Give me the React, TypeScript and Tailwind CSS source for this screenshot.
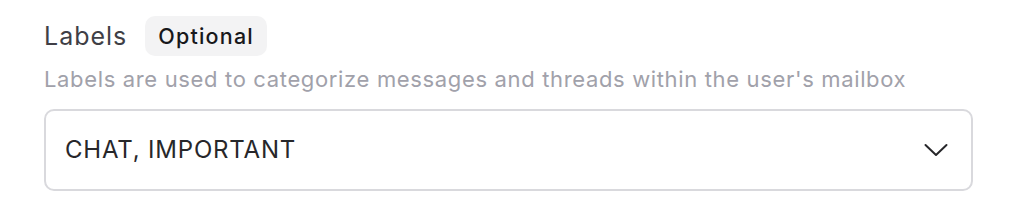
export default function App() {
  return (
    <div className="min-h-[216px] w-[1010px] bg-white font-['Inter',sans-serif]">
      <div className="flex w-[929px] flex-col pl-[44px] pt-[16px]">
        {/* Label row */}
        <div className="flex items-center gap-[18px]">
          <span className="text-[25px] leading-[40px] tracking-[1px] text-[#3f3f46]">Labels</span>
          <span className="rounded-[10px] bg-[#f3f3f4] px-[13px] text-[21.5px] leading-[40px] font-medium tracking-[1.2px] text-[#18181b]">
            Optional
          </span>
        </div>

        {/* Description */}
        <p className="mt-[9px] text-[22px] leading-[28px] tracking-[0.65px] text-[#a1a1aa]">
          Labels are used to categorize messages and threads within the user's mailbox
        </p>

        {/* Select */}
        <button className="mt-[16px] flex h-[82px] w-[929px] items-center justify-between rounded-[10px] border-2 border-[#d9d9dd] bg-white pl-[19px] pr-[23px] text-left">
          <span className="text-[24px] tracking-[0.8px] text-[#27272a]">CHAT, IMPORTANT</span>
          <svg width="24" height="14" viewBox="0 0 24 14" fill="none" className="text-[#27272a]">
            <polyline points="1.5,2 12,12 22.5,2" stroke="currentColor" strokeWidth="2" strokeLinecap="round" strokeLinejoin="round" />
          </svg>
        </button>
      </div>
    </div>
  );
}
